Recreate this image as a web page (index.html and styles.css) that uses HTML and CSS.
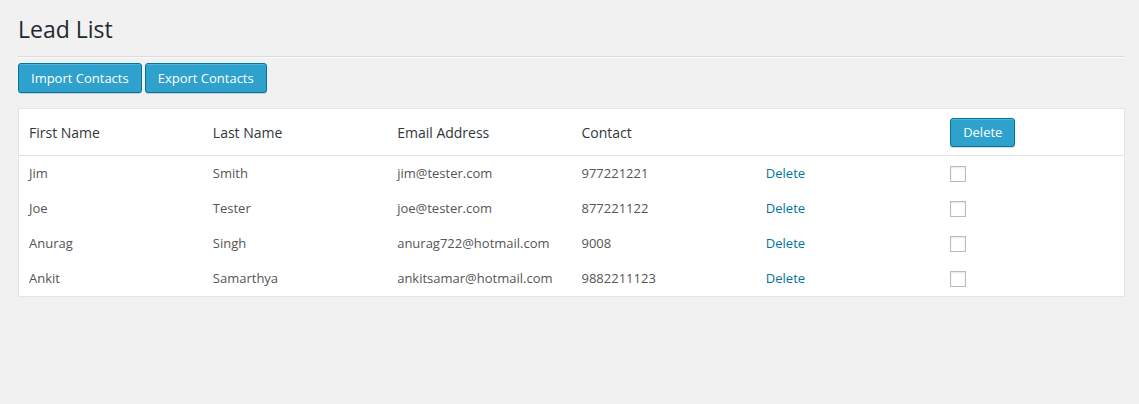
FILE: index.html
```html
<!DOCTYPE html>
<html>
<head>
<meta charset="utf-8">
<link rel="stylesheet" href="styles.css">
</head>
<body>
<div class="wrap">
  <h1 class="title">Lead List</h1>
  <div class="actions">
    <button class="btn">Import Contacts</button>
    <button class="btn">Export Contacts</button>
  </div>
  <table class="leads">
    <thead>
      <tr>
        <th>First Name</th>
        <th>Last Name</th>
        <th>Email Address</th>
        <th>Contact</th>
        <th></th>
        <th><button class="btn btn-sm">Delete</button></th>
      </tr>
    </thead>
    <tbody>
      <tr><td>Jim</td><td>Smith</td><td>jim@tester.com</td><td>977221221</td><td><a href="#">Delete</a></td><td><input type="checkbox" class="chk"></td></tr>
      <tr><td>Joe</td><td>Tester</td><td>joe@tester.com</td><td>877221122</td><td><a href="#">Delete</a></td><td><input type="checkbox" class="chk"></td></tr>
      <tr><td>Anurag</td><td>Singh</td><td>anurag722@hotmail.com</td><td>9008</td><td><a href="#">Delete</a></td><td><input type="checkbox" class="chk"></td></tr>
      <tr><td>Ankit</td><td>Samarthya</td><td>ankitsamar@hotmail.com</td><td>9882211123</td><td><a href="#">Delete</a></td><td><input type="checkbox" class="chk"></td></tr>
    </tbody>
  </table>
</div>
</body>
</html>
```

FILE: styles.css
```css
html, body {
  margin: 0;
  padding: 0;
  background: #f1f1f1;
}
body {
  font-family: "Open Sans", "Liberation Sans", sans-serif;
  color: #444;
  font-size: 13px;
}
.wrap {
  padding: 0 14px 0 18px;
}
.title {
  margin: 0;
  padding: 14px 0 12px;
  font-size: 23px;
  font-weight: 400;
  line-height: 30px;
  color: #23282d;
  border-bottom: 1px solid #dcdcdc;
  box-shadow: 0 1px 0 #fafafa;
}
.actions {
  display: flex;
  gap: 3px;
  padding-top: 6px;
}
.btn {
  font-family: "Open Sans", "Liberation Sans", sans-serif;
  font-size: 13px;
  line-height: 28px;
  height: 30px;
  padding: 0 12px 1px;
  color: #fff;
  background: #2ea2cc;
  border: 1px solid #0074a2;
  border-radius: 3px;
  box-shadow: inset 0 1px 0 rgba(120, 200, 230, 0.5), 0 1px 0 rgba(0, 0, 0, 0.15);
  cursor: pointer;
}
.btn-sm {
  height: 29px;
  line-height: 27px;
  padding: 0 12px 1px;
}
.leads {
  margin-top: 15px;
  width: 100%;
  table-layout: fixed;
  border-collapse: collapse;
  background: #fff;
  border: 1px solid #e5e5e5;
  box-shadow: 0 1px 1px rgba(0, 0, 0, 0.04);
}
.leads th {
  text-align: left;
  font-weight: 400;
  font-size: 14px;
  color: #32373c;
  padding: 8px 10px;
  height: 30px;
  border-bottom: 1px solid #e1e1e1;
  vertical-align: middle;
}
.leads td {
  padding: 8px 10px;
  line-height: 19px;
  color: #555;
  vertical-align: middle;
}
.leads a {
  color: #0074a2;
  text-decoration: none;
}
.chk {
  appearance: none;
  -webkit-appearance: none;
  display: block;
  margin: 0;
  width: 16px;
  height: 16px;
  border: 1px solid #bbb;
  background: #fff;
  box-shadow: inset 0 1px 2px rgba(0, 0, 0, 0.1);
}
```
